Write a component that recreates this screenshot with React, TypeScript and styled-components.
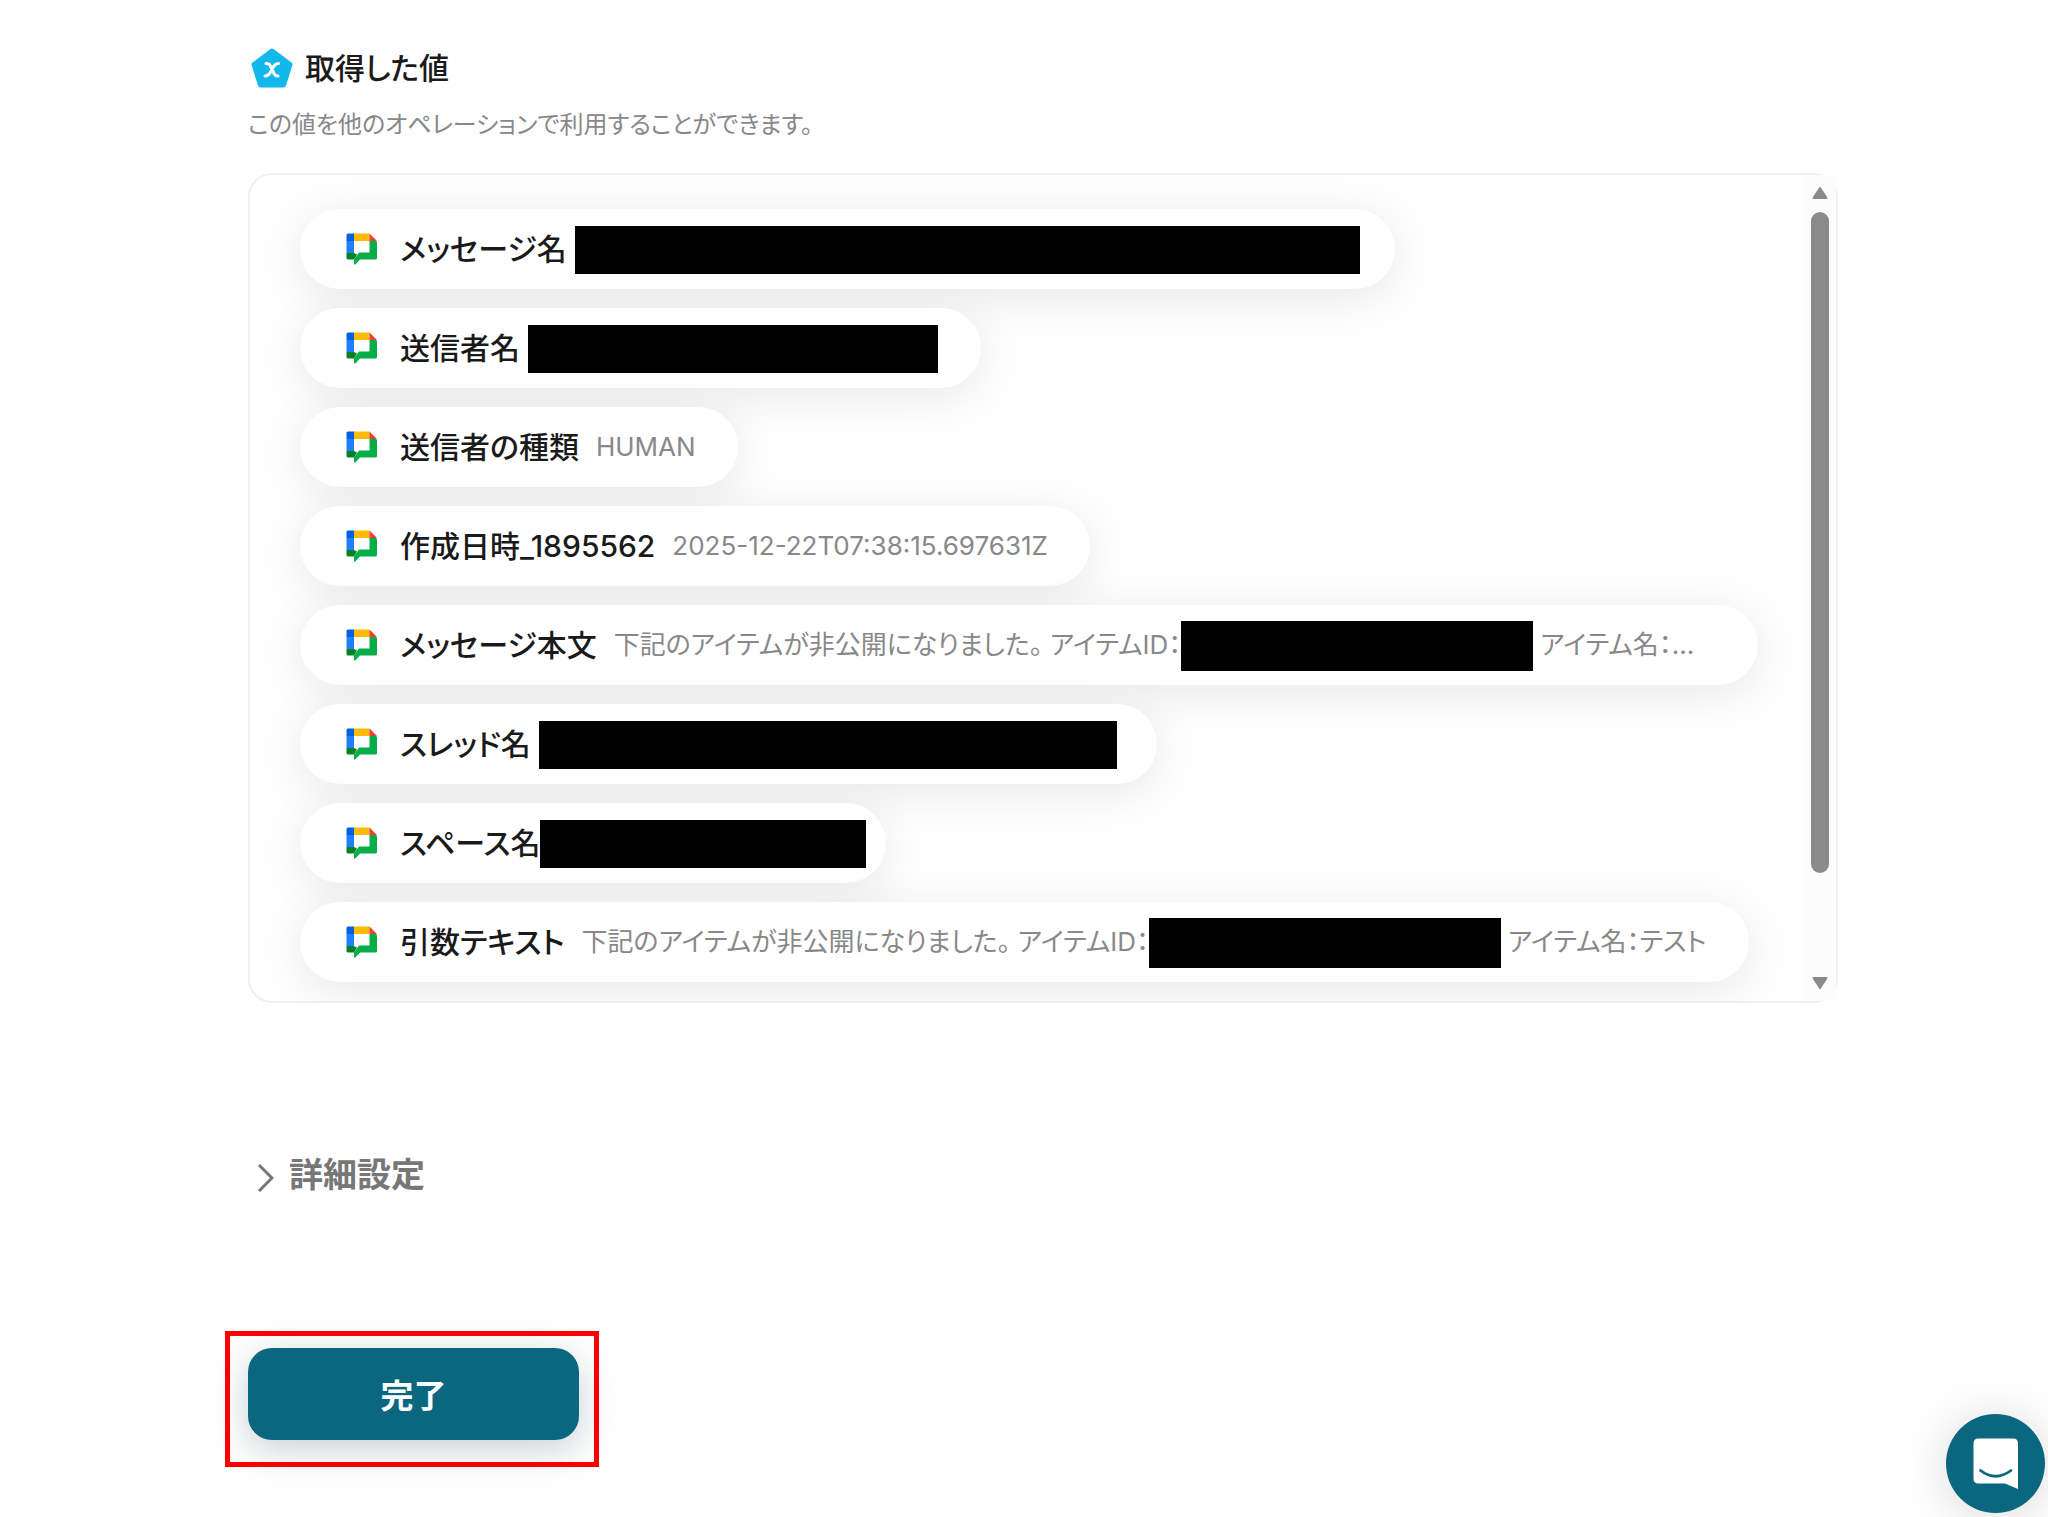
import React from "react";
import styled, { createGlobalStyle } from "styled-components";

const GlobalStyle = createGlobalStyle`
  *, *::before, *::after { box-sizing: border-box; }
  body {
    margin: 0;
    background: #fefefe;
    color: #1a1a1a;
    font-family: Inter, "Noto Sans CJK JP", sans-serif;
    font-feature-settings: "palt";
  }
`;

const Page = styled.main`
  padding: 44px 210px 48px 248px;
`;

const Heading = styled.header`
  display: flex;
  align-items: center;
  gap: 11px;
  height: 48px;
  padding-left: 2px;
`;

const Title = styled.h2`
  margin: 0;
  font-size: 30px;
  line-height: 48px;
  font-weight: 500;
`;

const Description = styled.p`
  margin: 16px 0 0;
  font-size: 24px;
  line-height: 34px;
  color: #888;
`;

const Panel = styled.section`
  display: flex;
  margin-top: 31px;
  height: 830px;
  border: 2px solid #f0f0f0;
  border-radius: 24px;
`;

const ValueList = styled.ul`
  flex: 1;
  min-width: 0;
  margin: 0;
  padding: 34px 50px 0;
  list-style: none;
  display: flex;
  flex-direction: column;
  align-items: flex-start;
  gap: 19px;
  overflow: hidden;
  border-radius: 22px 0 0 22px;
`;

const Pill = styled.li<{ $end: number }>`
  flex: none;
  display: flex;
  align-items: center;
  height: 80px;
  padding: 0 ${(p) => p.$end}px 0 46px;
  border-radius: 40px;
  background: #fff;
  box-shadow: 0 8px 48px rgba(0, 0, 0, 0.09);
  white-space: nowrap;
`;

const Label = styled.span`
  margin-left: 22px;
  font-size: 30px;
  line-height: 40px;
  font-weight: 500;
`;

const Value = styled.span<{ $gap: number }>`
  display: flex;
  align-items: center;
  margin-left: ${(p) => p.$gap}px;
  font-size: 26px;
  line-height: 40px;
  color: #888;
`;

const Redaction = styled.span<{ $width: number; $tall?: boolean }>`
  width: ${(p) => p.$width}px;
  height: ${(p) => (p.$tall ? 50 : 48)}px;
  margin-top: 2px;
  background: #000;

  &:not(:last-child) {
    margin-right: 7px;
  }
`;

const ScrollTrack = styled.div`
  flex: none;
  display: flex;
  flex-direction: column;
  align-items: center;
  width: 32px;
  padding: 11px 0;
  background: #fbfbfb;
`;

const ScrollThumb = styled.div`
  width: 18px;
  height: 661px;
  margin: 12px 0 auto;
  border-radius: 9px;
  background: #8a8a8a;
`;

const DetailToggle = styled.button`
  display: flex;
  align-items: center;
  gap: 15px;
  margin-top: 148px;
  padding: 0 0 0 9px;
  border: 0;
  background: none;
  color: #777;
  font: inherit;
  font-size: 34px;
  line-height: 48px;
  font-weight: 600;
`;

const Highlight = styled.div`
  width: fit-content;
  margin: 132px 0 0 -23px;
  padding: 12px 15px 22px 18px;
  border: 5px solid #f00;
`;

const SubmitButton = styled.button`
  display: block;
  width: 331px;
  height: 92px;
  border: 0;
  border-radius: 24px;
  background: #0b6780;
  box-shadow: 0 10px 36px rgba(20, 50, 65, 0.22);
  color: #fff;
  font: inherit;
  font-size: 33px;
  font-weight: 700;
`;

const ChatButton = styled.button`
  position: fixed;
  right: 3px;
  bottom: 4px;
  display: grid;
  place-items: center;
  width: 99px;
  height: 99px;
  padding: 0;
  border: 0;
  border-radius: 50%;
  background: #0b6780;
  box-shadow: 0 4px 48px rgba(0, 0, 0, 0.14);
`;

const VariableIcon = () => (
  <svg width="44" height="42" viewBox="0 0 44 42" aria-hidden="true">
    <path
      d="M22 4 L40 17.500 L33.500 38 H10.500 L4 17.500 Z"
      fill="#12b8ea"
      stroke="#12b8ea"
      strokeWidth="5"
      strokeLinejoin="round"
    />
    <path
      d="M16 16.500 h1 c1.800 0 2.700 1 3.500 2.500 l3.500 7.500 c0.800 1.500 1.700 2.500 3.500 2.500 h0.500 M28.500 16.500 c-2.500 0 -3.500 1 -4.600 2.500 l-4.300 7.500 c-1.100 1.500 -2.100 2.500 -4.600 2.500"
      fill="none"
      stroke="#fff"
      strokeWidth="3"
      strokeLinecap="round"
    />
  </svg>
);

const ChatAppIcon = () => (
  <svg width="32" height="32" viewBox="0 0 32 32" aria-hidden="true">
    <path d="M2 0.500 H8 V8 H0.500 V2 Q0.500 0.500 2 0.500Z" fill="#0062e0" />
    <path d="M0.500 8 H8 V20 H0.500Z" fill="#1f80ff" />
    <path d="M8 0.500 H23.500 V8 H8Z" fill="#fdba06" />
    <path d="M23.500 0.500 L31 8 H23.500Z" fill="#ee3f2f" />
    <path d="M23.500 8 H29.500 Q31 8 31 9.500 V25 Q31 26.500 29.500 26.500 H14 L9.500 31.300 Q8 32.300 8 30.500 V26.500 L13 19.500 H23.500Z" fill="#05ae48" />
    <path d="M0.500 20 H8 L11 21.500 L8 26.500 H2 Q0.500 26.500 0.500 25Z" fill="#078125" />
  </svg>
);

const ArrowIcon = ({ down = false }: { down?: boolean }) => (
  <svg width="18" height="14" viewBox="0 0 18 14" aria-hidden="true">
    <path
      d={down ? "M2.500 2 H15.500 L9 12Z" : "M2.500 12 H15.500 L9 2Z"}
      fill="#8a8a8a"
      stroke="#8a8a8a"
      strokeWidth="2"
      strokeLinejoin="round"
    />
  </svg>
);

type Part = string | number;

interface Row {
  label: string;
  parts: Part[];
  gap?: number;
  end?: number;
  tall?: boolean;
}

const rows: Row[] = [
  { label: "メッセージ名", parts: [785], gap: 8, end: 35 },
  { label: "送信者名", parts: [410], gap: 8, end: 43 },
  { label: "送信者の種類", parts: ["HUMAN"] },
  { label: "作成日時_1895562", parts: ["2025-12-22T07:38:15.697631Z"] },
  {
    label: "メッセージ本文",
    parts: ["下記のアイテムが非公開になりました。 アイテムID：", 352, "アイテム名：..."],
    end: 64,
    tall: true,
  },
  { label: "スレッド名", parts: [578], gap: 8, end: 40 },
  { label: "スペース名", parts: [326], gap: 0, end: 20 },
  {
    label: "引数テキスト",
    parts: ["下記のアイテムが非公開になりました。 アイテムID：", 352, "アイテム名：テスト"],
    tall: true,
  },
];

export default function App() {
  return (
    <>
      <GlobalStyle />
      <Page>
        <Heading>
          <VariableIcon />
          <Title>取得した値</Title>
        </Heading>
        <Description>この値を他のオペレーションで利用することができます。</Description>

        <Panel>
          <ValueList>
            {rows.map((row) => (
              <Pill key={row.label} $end={row.end ?? 42}>
                <ChatAppIcon />
                <Label>{row.label}</Label>
                <Value $gap={row.gap ?? 17}>
                  {row.parts.map((part, i) =>
                    typeof part === "number" ? (
                      <Redaction key={i} $width={part} $tall={row.tall} />
                    ) : (
                      <span key={i}>{part}</span>
                    )
                  )}
                </Value>
              </Pill>
            ))}
          </ValueList>
          <ScrollTrack>
            <ArrowIcon />
            <ScrollThumb />
            <ArrowIcon down />
          </ScrollTrack>
        </Panel>

        <DetailToggle type="button" aria-expanded={false}>
          <svg width="17" height="34" viewBox="0 0 17 34" aria-hidden="true">
            <path d="M2 7 L15 20 L2 33" fill="none" stroke="#777" strokeWidth="3" />
          </svg>
          詳細設定
        </DetailToggle>

        <Highlight>
          <SubmitButton type="button">完了</SubmitButton>
        </Highlight>
      </Page>

      <ChatButton type="button" aria-label="チャット">
        <svg width="46" height="52" viewBox="0 0 46 52" aria-hidden="true">
          <path
            d="M5.500 0.500 H40 Q45 0.500 45 5.500 V51 L32 45.500 H5.500 Q0.500 45.500 0.500 40.500 V5.500 Q0.500 0.500 5.500 0.500Z"
            fill="#fff"
          />
          <path d="M7.500 32.500 Q22.500 44 38 32.500" fill="none" stroke="#0b6780" strokeWidth="2.800" strokeLinecap="round" />
        </svg>
      </ChatButton>
    </>
  );
}
